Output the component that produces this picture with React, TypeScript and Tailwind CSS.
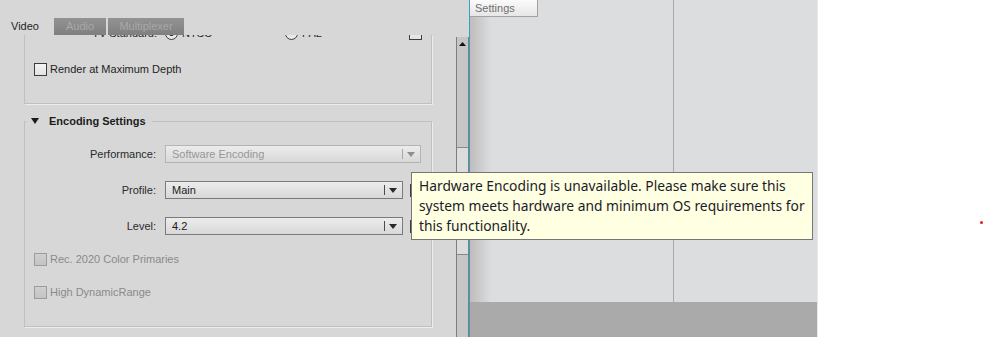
import React from "react";

const ui = { fontFamily: '"Liberation Sans", Arial, sans-serif' };
const tip = { fontFamily: '"Noto Sans", "Open Sans", sans-serif' };

const Check = ({ disabled }: { disabled?: boolean }) => (
  <div
    className={
      "w-[13px] h-[13px] shrink-0 border " +
      (disabled
        ? "border-[#9c9c9c] bg-gradient-to-b from-[#d0d0d0] to-[#c4c4c4]"
        : "border-[#3c3c3c] bg-gradient-to-b from-[#f4f4f4] to-[#e2e2e2]")
    }
  />
);

const Radio = ({ on }: { on?: boolean }) => (
  <div className="w-[13px] h-[13px] shrink-0 rounded-full border border-[#3c3c3c] bg-[#e8e8e8] flex items-center justify-center">
    {on && <div className="w-[5px] h-[5px] rounded-full bg-[#202020]" />}
  </div>
);

const Select = ({
  value,
  width,
  disabled,
}: {
  value: string;
  width: string;
  disabled?: boolean;
}) => (
  <div
    className={
      "h-[18px] flex items-stretch border bg-gradient-to-b from-[#ececec] to-[#d8d8d8] " +
      width +
      (disabled ? " border-[#b4b4b4] text-[#979797]" : " border-[#7a7a7a] text-[#1a1a1a]")
    }
  >
    <div className="flex-1 pl-[6px] text-[11px] leading-[16px]">{value}</div>
    <div className="w-[18px] flex items-center justify-center relative">
      <div
        className={
          "absolute left-0 top-[3px] bottom-[3px] w-px " +
          (disabled ? "bg-[#a8a8a8]" : "bg-[#4a4a4a]")
        }
      />
      <svg width="8" height="5" viewBox="0 0 8 5">
        <path d="M0 0H8L4 5Z" fill={disabled ? "#8e8e8e" : "#2a2a2a"} />
      </svg>
    </div>
  </div>
);

const FieldRow = ({
  label,
  children,
  className = "",
}: {
  label: string;
  children: React.ReactNode;
  className?: string;
}) => (
  <div className={"flex items-center h-[18px] " + className}>
    <div className="w-[131px] text-right text-[11px] text-[#2a2a2a]">{label}</div>
    <div className="ml-[9px] flex items-center gap-[7px]">{children}</div>
  </div>
);

export default function App() {
  return (
    <div className="relative flex w-[984px] h-[337px] bg-white overflow-hidden" style={ui}>
      {/* left panel */}
      <div className="w-[469px] shrink-0 flex flex-col bg-[#d7d7d7]">
        <div className="h-[17px]" />
        <div className="h-[18px] flex items-end gap-[2px] relative z-10">
          <div className="w-[52px] h-[18px] bg-[#d7d7d7] text-[11px] text-[#1e1e1e] pl-[11px] leading-[18px]">
            Video
          </div>
          <div className="w-[52px] h-[17px] bg-gradient-to-b from-[#939393] to-[#7f7f7f] text-[11px] text-[#a9a9a9] text-center leading-[17px]">
            Audio
          </div>
          <div className="w-[76px] h-[17px] bg-gradient-to-b from-[#939393] to-[#7f7f7f] text-[11px] text-[#a9a9a9] text-center leading-[17px]">
            Multiplexer
          </div>
        </div>
        <div className="flex-1 flex overflow-hidden">
          <div className="w-[456px] overflow-hidden pl-[24px]">
            {/* group 1 (scrolled) */}
            <div className="w-[408px] h-[69px] flex flex-col border-x border-b border-[#c0c0c0] shadow-[1px_1px_0_#ececec]">
              <div className="flex items-center h-[18px] -mt-[11px]">
                <div className="w-[132px] text-right text-[11px] text-[#2a2a2a]">TV Standard:</div>
                <div className="ml-[8px] flex items-center gap-[4px] w-[120px]">
                  <Radio on />
                  <span className="text-[11px] text-[#2a2a2a]">NTSC</span>
                </div>
                <div className="flex items-center gap-[4px] w-[124px]">
                  <Radio />
                  <span className="text-[11px] text-[#2a2a2a]">PAL</span>
                </div>
                <Check />
              </div>
              <div className="flex items-center h-[18px] mt-[18px] pl-[9px] gap-[3px]">
                <Check />
                <span className="text-[11px] text-[#1e1e1e]">Render at Maximum Depth</span>
              </div>
            </div>

            {/* group 2 */}
            <div className="w-[408px] h-[206px] mt-[17px] flex flex-col border border-[#c0c0c0] shadow-[1px_1px_0_#ececec]">
              <div className="-mt-[9px] ml-[1px] self-start h-[16px] bg-[#d7d7d7] flex items-center pl-[5px] pr-[6px] gap-[10px] whitespace-nowrap">
                <svg width="8" height="6" viewBox="0 0 8 6">
                  <path d="M0 0H8L4 6Z" fill="#1c1c1c" />
                </svg>
                <span className="text-[11px] font-bold text-[#1c1c1c]">Encoding Settings</span>
              </div>
              <FieldRow label="Performance:" className="mt-[16px]">
                <Select value="Software Encoding" width="w-[256px]" disabled />
              </FieldRow>
              <FieldRow label="Profile:" className="mt-[18px]">
                <Select value="Main" width="w-[238px]" />
                <Check />
              </FieldRow>
              <FieldRow label="Level:" className="mt-[18px]">
                <Select value="4.2" width="w-[238px]" />
                <Check />
              </FieldRow>
              <div className="flex items-center h-[18px] mt-[15px] pl-[9px] gap-[3px]">
                <Check disabled />
                <span className="text-[11px] text-[#8a8a8a]">Rec. 2020 Color Primaries</span>
              </div>
              <div className="flex items-center h-[18px] mt-[15px] pl-[9px] gap-[3px]">
                <Check disabled />
                <span className="text-[11px] text-[#8a8a8a]">High DynamicRange</span>
              </div>
            </div>
          </div>

          {/* scrollbar */}
          <div className="w-[13px] mt-[2px] flex flex-col border-x border-[#7e7e7e] bg-[#c6c6c6]">
            <div className="h-[13px] flex items-center justify-center">
              <svg width="7" height="4" viewBox="0 0 7 4">
                <path d="M0 4H7L3.5 0Z" fill="#111" />
              </svg>
            </div>
            <div className="h-[97px]" />
            <div className="h-[108px] bg-[#dcdcdc] border-y border-[#8a8a8a]" />
            <div className="flex-1" />
          </div>
        </div>
      </div>

      {/* blue edge */}
      <div className="w-px shrink-0 bg-[#3a9fc0]" />

      {/* right area */}
      <div className="w-[347px] shrink-0 flex flex-col bg-[#dcdddf]">
        <div className="flex-1 flex bg-gradient-to-r from-[#bdbdbd] via-[#dcdddf] via-[6%] to-[#dcdddf]">
          <div className="w-[203px] flex flex-col">
            <div className="w-[68px] h-[17px] border-r border-b border-[#a2a2a2] bg-gradient-to-b from-[#fbfbfb] to-[#e6e6e6] text-[11px] text-[#6e6e6e] pl-[5px] leading-[16px]">
              Settings
            </div>
          </div>
          <div className="w-px bg-[#a9a9a9]" />
          <div className="flex-1" />
        </div>
        <div className="h-[35px] bg-[#aaaaaa]" />
      </div>
      <div className="w-px shrink-0 bg-[#e8e8e8]" />

      {/* white area with marker */}
      <div className="flex-1 relative">
        <div className="absolute left-[162px] top-[221px] w-[3px] h-[3px] rounded-full bg-[#e81c1c]" />
      </div>

      {/* tooltip */}
      <div
        className="absolute left-[411px] top-[172px] w-[402px] h-[68px] bg-[#ffffe1] border border-[#767676] pl-[7px] pt-[3px] text-[13.8px] leading-[20px] text-[#1b1b2b]"
        style={tip}
      >
        Hardware Encoding is unavailable. Please make sure this
        <br />
        system meets hardware and minimum OS requirements for
        <br />
        this functionality.
      </div>
    </div>
  );
}
